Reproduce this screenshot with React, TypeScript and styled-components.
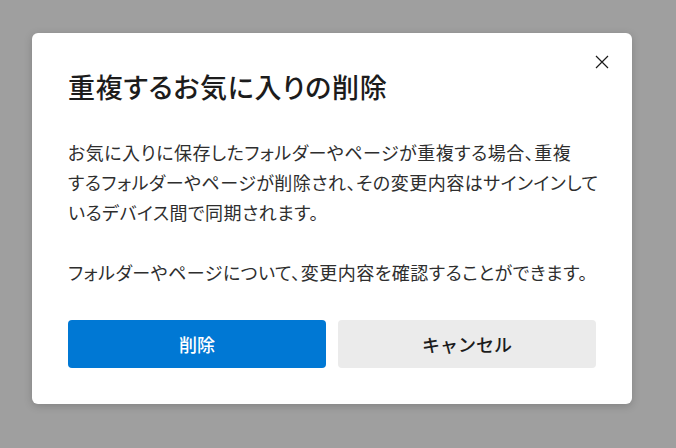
import React from 'react';
import styled, { createGlobalStyle } from 'styled-components';

const GlobalStyle = createGlobalStyle`
  html,
  body {
    margin: 0;
    padding: 0;
    background: #9f9f9f;
    font-family: 'Noto Sans CJK JP', 'Noto Sans', sans-serif;
  }
`;

const App: React.FC = () => {
  return (
    <Backdrop>
      <GlobalStyle />
      <Dialog>
        <CloseButton aria-label="閉じる">
          <svg width="14" height="14" viewBox="0 0 14 14">
            <path d="M1 1 L13 13 M13 1 L1 13" stroke="#1a1a1a" strokeWidth="1.2" />
          </svg>
        </CloseButton>
        <Title>重複するお気に入りの削除</Title>
        <Body>
          <p>
            お気に入りに保存したフォルダーやページが重複する場合、重複
            <br />
            するフォルダーやページが削除され、その変更内容はサインインして
            <br />
            いるデバイス間で同期されます。
          </p>
          <p>フォルダーやページについて、変更内容を確認することができます。</p>
        </Body>
        <Actions>
          <Button primary>削除</Button>
          <Button>キャンセル</Button>
        </Actions>
      </Dialog>
    </Backdrop>
  );
};

export default App;

// Styles
const Backdrop = styled.div`
  width: 676px;
  height: 448px;
  padding: 33px 0 0 32px;
  box-sizing: border-box;
`;

const Dialog = styled.div`
  position: relative;
  width: 600px;
  height: 371px;
  box-sizing: border-box;
  padding: 36px 36px 36px;
  background: #ffffff;
  border-radius: 6px;
  box-shadow: 0 2px 8px rgba(0, 0, 0, 0.18);
  display: flex;
  flex-direction: column;
`;

const CloseButton = styled.button`
  position: absolute;
  top: 15px;
  right: 16px;
  width: 28px;
  height: 28px;
  padding: 0;
  border: none;
  background: transparent;
  display: flex;
  align-items: center;
  justify-content: center;
`;

const Title = styled.h1`
  margin: 0;
  font-size: 27px;
  line-height: 36px;
  font-weight: 500;
  color: #1c1c1c;
  font-feature-settings: 'palt';
  letter-spacing: 0.7px;
`;

const Body = styled.div`
  margin-top: 32px;
  font-size: 18px;
  line-height: 30px;
  color: #2e2e2e;
  font-feature-settings: 'palt';
  letter-spacing: 0.5px;
  white-space: nowrap;
  p {
    margin: 0;
  }
  p + p {
    margin-top: 30px;
  }
`;

const Actions = styled.div`
  margin-top: auto;
  display: grid;
  grid-template-columns: 1fr 1fr;
  gap: 12px;
`;

const Button = styled.button<{ primary?: boolean }>`
  height: 48px;
  border: none;
  border-radius: 4px;
  font-family: inherit;
  font-size: 18px;
  font-weight: 500;
  background: ${(p) => (p.primary ? '#0078d4' : '#ebebeb')};
  color: ${(p) => (p.primary ? '#ffffff' : '#1c1c1c')};
`;
